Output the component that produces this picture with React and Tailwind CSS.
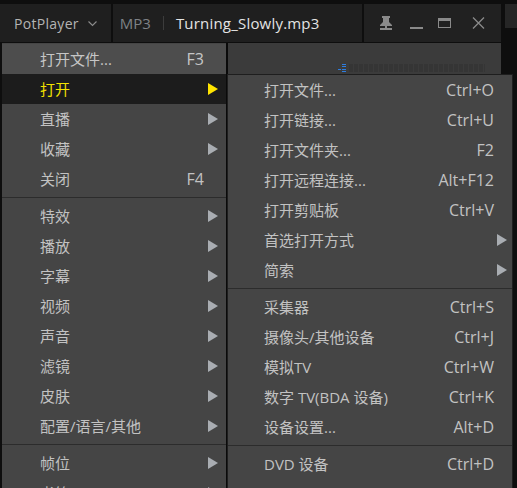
import React from "react"

const font = { fontFamily: '"Open Sans", "Noto Sans CJK SC", sans-serif' }

const mainItems = [
  { label: "打开文件...", key: "F3", hover: true },
  { label: "打开", sub: true, active: true },
  { label: "直播", sub: true },
  { label: "收藏", sub: true },
  { label: "关闭", key: "F4" },
  { sep: true },
  { label: "特效", sub: true },
  { label: "播放", sub: true },
  { label: "字幕", sub: true },
  { label: "视频", sub: true },
  { label: "声音", sub: true },
  { label: "滤镜", sub: true },
  { label: "皮肤", sub: true },
  { label: "配置/语言/其他", sub: true },
  { sep: true },
  { label: "帧位", sub: true },
  { label: "书签", sub: true },
]

const openItems = [
  { label: "打开文件...", key: "Ctrl+O" },
  { label: "打开链接...", key: "Ctrl+U" },
  { label: "打开文件夹...", key: "F2" },
  { label: "打开远程连接...", key: "Alt+F12" },
  { label: "打开剪贴板", key: "Ctrl+V" },
  { label: "首选打开方式", sub: true },
  { label: "简索", sub: true },
  { sep: true },
  { label: "采集器", key: "Ctrl+S" },
  { label: "摄像头/其他设备", key: "Ctrl+J" },
  { label: "模拟TV", key: "Ctrl+W" },
  { label: "数字 TV(BDA 设备)", key: "Ctrl+K" },
  { label: "设备设置...", key: "Alt+D" },
  { sep: true },
  { label: "DVD 设备", key: "Ctrl+D" },
]

function Arrow({ yellow }) {
  return (
    <svg width="10" height="12" viewBox="0 0 10 12">
      <path d="M0 0 L10 6 L0 12 Z" fill={yellow ? "#ffe400" : "#a9adb2"} />
    </svg>
  )
}

function Menu({ items, padLeft, keyRight, arrowOffset }) {
  return (
    <div className="flex flex-col">
      {items.map((it, i) =>
        it.sep ? (
          <div key={i} className="h-[7px] flex items-center">
            <div className="h-px w-full bg-[#2c2c2c]" />
          </div>
        ) : (
          <div
            key={i}
            className={`h-[30px] flex items-center text-[15px] ${
              it.active ? "bg-[#1c1c1c] text-[#f2e200]" : it.hover ? "bg-[#4d4d4d] text-[#c6c6c6]" : "text-[#c2c2c2]"
            }`}
            style={{ paddingLeft: padLeft }}
          >
            <span className="flex-1 whitespace-nowrap">{it.label}</span>
            <span className="whitespace-nowrap text-[16px]" style={{ marginRight: keyRight }}>
              {it.key || ""}
            </span>
            {it.sub && (
              <span className="flex items-center" style={{ marginLeft: -keyRight + arrowOffset, marginRight: keyRight - arrowOffset - 10 }}>
                <Arrow yellow={it.active} />
              </span>
            )}
          </div>
        )
      )}
    </div>
  )
}

export default function App() {
  return (
    <div className="relative w-[517px] h-[488px] overflow-hidden bg-[#0e0e0e]" style={font}>
      {/* title bar */}
      <div className="pt-[4px] flex h-[43px]">
        <div className="w-[111px] h-[38px] bg-[#1f1f1f] flex items-center pl-[14px] gap-[9px]">
          <span className="text-[14px] tracking-[0.3px] text-[#b4b4b4]">PotPlayer</span>
          <svg width="9" height="6" viewBox="0 0 9 6" className="mt-[1px]">
            <path d="M0.5 0.5 L4.5 4.5 L8.5 0.5" stroke="#8c8c8c" strokeWidth="1.1" fill="none" />
          </svg>
        </div>
        <div className="ml-[2px] w-[250px] h-[38px] bg-[#1f1f1f] flex items-center pl-[7px]">
          <span className="text-[15px] text-[#7e8286]">MP3</span>
          <span className="mx-[12px] w-px h-[14px] bg-[#3c3c3c]" />
          <span className="text-[15px] tracking-[0.2px] text-[#e4e4e4]">Turning_Slowly.mp3</span>
        </div>
        <div className="ml-[2px] w-[137px] h-[38px] bg-[#212121] flex items-center">
          <svg width="14" height="14" viewBox="0 0 14 14" className="ml-[15px]">
            <path d="M3 0 H11 V2 H10 V6 L13 9 V10 H1 V9 L4 6 V2 H3 Z" fill="#8a8a8a" />
            <rect x="1" y="12" width="12" height="2" fill="#8a8a8a" />
            <rect x="6" y="10" width="2" height="2" fill="#8a8a8a" />
          </svg>
          <svg width="13" height="13" viewBox="0 0 13 13" className="ml-[17px]">
            <rect x="0" y="10" width="13" height="2" fill="#8a8a8a" />
          </svg>
          <svg width="13" height="11" viewBox="0 0 13 11" className="ml-[15px]">
            <rect x="0.5" y="0.5" width="12" height="9" stroke="#8a8a8a" fill="none" />
            <rect x="0" y="0" width="13" height="3" fill="#8a8a8a" />
          </svg>
          <svg width="13" height="12" viewBox="0 0 13 12" className="ml-[21px]">
            <path d="M1 0.5 L12 11.5 M12 0.5 L1 11.5" stroke="#8a8a8a" strokeWidth="1.3" />
          </svg>
        </div>
        <div className="ml-[4px] w-[12px] h-[24px] bg-[#262626]" />
      </div>

      {/* player area behind menus */}
      <div className="ml-[228px] w-[273px] h-[31px] bg-[#3b3b3b] flex items-end pb-[2px] pl-[110px]">
        <div className="flex items-end gap-[1px]">
          <span className="w-[3px] h-px bg-[#2d7de0] mb-[2px]" />
          <span className="w-[4px] h-[8px] flex flex-col justify-between">
            <span className="h-px bg-[#2d7de0]" />
            <span className="h-px bg-[#2d7de0]" />
            <span className="h-px bg-[#2d7de0]" />
            <span className="h-px bg-[#2d7de0]" />
          </span>
          <span className="w-[136px] h-[8px] ml-[2px] bg-[repeating-linear-gradient(90deg,#353535_0_4px,#3b3b3b_4px_5px)]" />
        </div>
      </div>

      {/* main menu */}
      <div className="absolute left-[2px] top-[43px] w-[226px] h-[460px] bg-[#454545] border-r-2 border-[#0a0a0a] pt-px">
        <Menu items={mainItems} padLeft={38} keyRight={22} arrowOffset={4} />
      </div>

      {/* open submenu */}
      <div className="absolute left-[227px] top-[74px] w-[286px] h-[430px] bg-[#454545] border border-[#1e1e1e]">
        <Menu items={openItems} padLeft={36} keyRight={18} arrowOffset={3} />
      </div>
    </div>
  )
}
